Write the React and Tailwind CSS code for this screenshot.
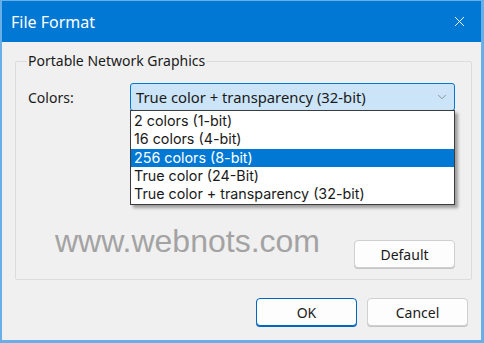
import { X, ChevronDown } from 'lucide-react'

const options = [
  '2 colors (1-bit)',
  '16 colors (4-bit)',
  '256 colors (8-bit)',
  'True color (24-Bit)',
  'True color + transparency (32-bit)',
]

export default function App() {
  return (
    <div className="w-[484px] h-[343px] bg-[#6aaee8] pl-[2px] pr-[3px] pb-[3px] pt-[1px] font-['Noto_Sans',sans-serif]">
      <div className="h-full flex flex-col bg-[#f0f0f0]">
        {/* Title bar */}
        <div className="h-[41px] bg-[#0078d4] flex items-center justify-between pl-[9px] pr-[13px] text-white">
          <span className="text-[16px]">File Format</span>
          <X size={17} strokeWidth={1.3} />
        </div>

        {/* Group */}
        <div className="pl-[13px] pr-[9px] pt-[11px]">
          <fieldset className="border border-[#dcdcdc] rounded-[2px] h-[227px] pl-[12px] pr-[16px] relative">
            <legend className="px-[1px] ml-[-1px] text-[14px] text-[#1a1a1a] leading-[16px]">Portable Network Graphics</legend>

            <div className="flex items-center mt-[14px]">
              <span className="w-[102px] text-[14px] text-[#1a1a1a]">Colors:</span>
              <div className="relative">
                <div className="w-[325px] h-[28px] bg-[#cce4f7] border border-[#0078d4] rounded-[3px] flex items-center justify-between pl-[5px] pr-[5px]">
                  <span className="text-[14.8px] text-[#1a1a1a]">True color + transparency (32-bit)</span>
                  <ChevronDown size={14} strokeWidth={1.3} className="text-[#777]" />
                </div>
                <div className="absolute left-0 top-[27px] w-[325px] bg-white border border-[#3c3c3c] shadow-[3px_3px_3px_rgba(0,0,0,0.35)] py-[1px] font-['Inter',sans-serif]">
                  {options.map((o, i) => (
                    <div
                      key={o}
                      className={
                        i === 2
                          ? 'h-[18.3px] leading-[18.3px] pl-[3px] text-[14.3px] bg-[#0078d4] text-white'
                          : 'h-[18.3px] leading-[18.3px] pl-[3px] text-[14.3px] text-[#1a1a1a]'
                      }
                    >
                      {o}
                    </div>
                  ))}
                </div>
              </div>
            </div>

            <div className="flex items-end justify-between mt-[114px]">
              <span className="ml-[27px] mb-[11px] text-[32px] leading-none text-[#a3a3a3] font-['Liberation_Sans',sans-serif]">www.webnots.com</span>
              <button className="w-[101px] h-[28px] bg-[#fdfdfd] border border-[#d0d0d0] rounded-[4px] text-[14px] text-[#1a1a1a] shadow-[0_1px_0_#c4c4c4]">
                Default
              </button>
            </div>
          </fieldset>
        </div>

        {/* Footer buttons */}
        <div className="flex justify-end gap-[10px] pr-[13px] mt-[18px]">
          <button className="w-[101px] h-[28px] bg-[#fdfdfd] border border-[#0067c0] rounded-[4px] text-[14px] text-[#1a1a1a] shadow-[0_1px_0_#0067c0]">
            OK
          </button>
          <button className="w-[101px] h-[28px] bg-[#fdfdfd] border border-[#d0d0d0] rounded-[4px] text-[14px] text-[#1a1a1a] shadow-[0_1px_0_#c4c4c4]">
            Cancel
          </button>
        </div>
      </div>
    </div>
  )
}
